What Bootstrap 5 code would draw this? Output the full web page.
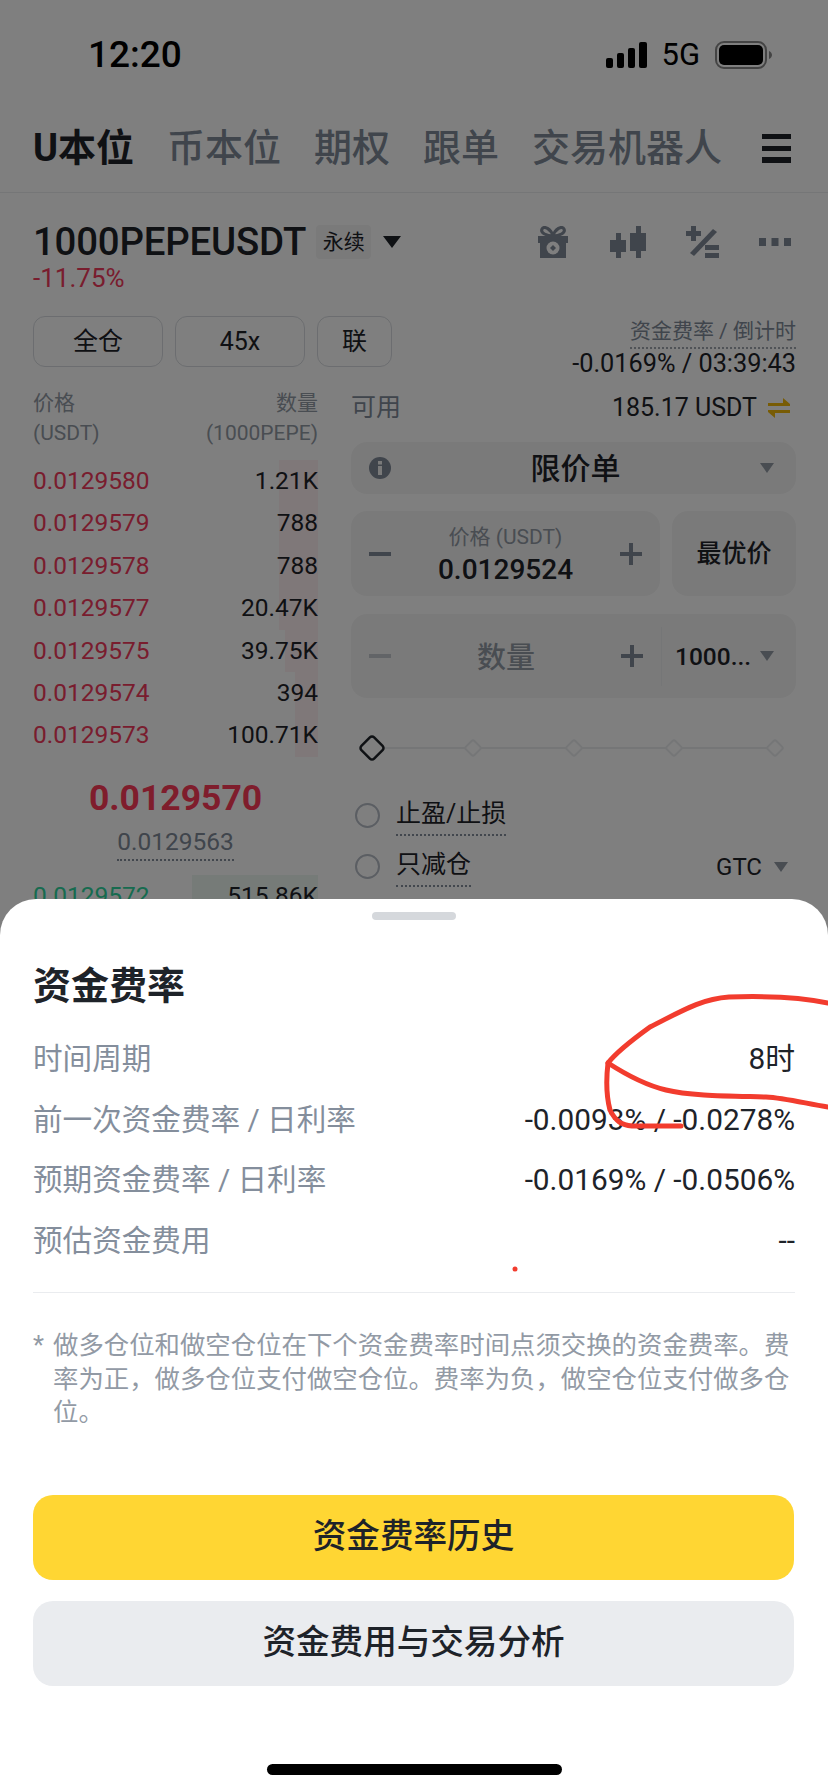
<!DOCTYPE html>
<html lang="zh-CN">
<head>
<meta charset="UTF-8">
<title>资金费率</title>
<meta name="viewport" content="width=device-width, initial-scale=1">
<link href="https://cdn.jsdelivr.net/npm/bootstrap@5.3.0/dist/css/bootstrap.min.css" rel="stylesheet">
<style>
html, body { margin: 0; background: #fff; }
body { font-family: Roboto, "Noto Sans CJK SC", sans-serif; color: #1e2329; }
.app { width: 828px; height: 1792px; position: relative; overflow: hidden; background: #fff; }
.status-bar { height: 100px; padding: 40px 56px 0 88px; }
.clock { font-size: 37px; font-weight: 500; line-height: 30px; color: #000; }
.net { font-size: 31px; line-height: 30px; color: #000; margin: 0 15px 0 14px; }
.tabs-bar { height: 93px; padding: 4px 37px 0 33px; border-bottom: 1px solid #eaecef; gap: 33px; }
.tab-item { font-size: 38px; line-height: 48px; font-weight: 500; color: #808a98; white-space: nowrap; }
.tab-item.on { color: #1e2329; font-weight: 700; }
.burger { margin-left: auto; width: 29px; height: 29px; border-top: 5px solid #1e2329; border-bottom: 6px solid #1e2329; position: relative; flex: none; }
.burger::after { content: ""; position: absolute; left: 0; right: 0; top: 7px; height: 5px; background: #1e2329; }
.sym-row { padding: 24px 37px 0 33px; height: 73px; }
.sym { font-size: 38.4px; line-height: 44px; font-weight: 500; letter-spacing: -.2px; }
.perp { width: 55px; height: 34px; margin-left: 10px; background: #f5f5f5; border-radius: 4px; font-size: 21px; line-height: 34px; text-align: center; color: #1e2329; }
.tools { margin-left: auto; gap: 40px; }
.gift-ic { margin-right: 2px; }
.chg { padding-left: 33px; font-size: 26px; line-height: 24px; height: 26px; color: #f23a5c; }
.main-cols { padding: 0 32px 0 33px; gap: 33px; }
.left-col { width: 285px; flex: none; }
.right-col { flex: 1 1 auto; min-width: 0; }
.mode-row { width: 360px; margin-top: 24px; gap: 12px; }
.mode-btn { height: 51px; border: 1px solid #d8dbe0; border-radius: 12px; font-size: 25px; line-height: 49px; text-align: center; color: #1e2329; }
.w130 { width: 130px; }
.w75 { width: 75px; }
.rate-box { height: 75px; margin-left: auto; padding-top: 26px; text-align: right; white-space: nowrap; }
.rate-lbl { display: inline-block; font-size: 21px; line-height: 27px; color: #808a98; border-bottom: 2px dotted #a0a6ae; padding-bottom: 2px; }
.rate-val { font-size: 25.3px; line-height: 30px; }
.book-head { font-size: 21px; line-height: 30px; color: #929aa5; margin-top: 21px; height: 62px; }
.book-list { margin-top: 10px; }
.book-row { height: 42.4px; font-size: 24.5px; line-height: 42px; position: relative; }
.book-row > span { position: relative; }
.depth { position: absolute; right: 0; top: 0; bottom: 0; background: #fff0f2; }
.depth.buy { background: #ecf6f1; }
.px-sell { color: #f23a5c; }
.px-buy { color: #2ed69f; }
.mid { margin-top: 19px; text-align: center; }
.mid-px { font-size: 35.5px; line-height: 44px; font-weight: 700; color: #ff3a58; }
.mid-mark { display: inline-block; font-size: 24.5px; line-height: 30px; color: #808a98; border-bottom: 2px dotted #848e9c; padding-bottom: 2px; margin-top: 7px; }
.buy-row { margin-top: 14px; }
.avail { height: 42px; margin-top: 20px; font-size: 25px; line-height: 42px; }
.avail-lbl { font-size: 25px; color: #808a98; }
.swap-ic { margin: 0 6px 0 11px; }
.field { background: #f5f5f5; border-radius: 16px; }
.order-type { height: 52px; margin-top: 13px; padding: 0 22px 0 18px; font-size: 30px; font-weight: 500; }
.grow-c { flex: 1 1 auto; text-align: center; min-width: 0; }
.price-row { margin-top: 17px; gap: 12px; height: 85px; }
.price-box { width: 309px; padding: 0 18px; }
.price-mid { padding-top: 3px; }
.best { flex: 1 1 auto; text-align: center; font-size: 25px; font-weight: 500; line-height: 85px; }
.price-lbl { font-size: 21px; line-height: 26px; color: #929aa5; }
.price-val { font-size: 28px; line-height: 34px; font-weight: 500; margin-top: 3px; }
.qty-box { height: 84px; margin-top: 18px; padding: 0 22px 0 18px; }
.qty-lbl { font-size: 29px; color: #929aa5; line-height: 84px; font-weight: 500; padding-top: 3px; }
.unit { border-left: 1px solid #eaecef; height: 59px; padding-left: 13px; margin-left: 18px; font-size: 24.5px; line-height: 59px; font-weight: 500; width: 113px; flex: none; }
.slider-row { margin-top: 35px; height: 30px; padding: 0 11px; position: relative; }
.slider-row::before { content: ""; position: absolute; left: 21px; right: 21px; top: 14px; height: 2px; background: #eaecef; }
.thumb-big { margin: 0 -5px; position: relative; flex: none; }
.thumb-sm { position: relative; flex: none; }
.check-list { margin-top: 27px; }
.check-row { height: 51px; font-size: 25px; line-height: 36px; color: #1e2329; }
.radio-o { width: 25px; height: 25px; border: 2px solid #b7bdc6; border-radius: 50%; margin: 0 16px 0 4px; flex: none; }
.dot-u { border-bottom: 2px dotted #848e9c; padding-bottom: 2px; }
.gtc { font-size: 24px; margin-right: 12px; }
.backdrop { position: absolute; inset: 0; background: rgba(0, 0, 0, .5); }
.sheet { position: absolute; left: 0; right: 0; bottom: 0; height: 893px; background: #fff; border-radius: 36px 36px 0 0; padding: 0 33px; }
.grab { width: 84px; height: 8px; margin: 13px auto 0; border-radius: 4px; background: #d5d8dc; }
.sheet-title { font-size: 38px; line-height: 48px; font-weight: 700; margin: 42px 0 0; }
.rows-wrap { margin-top: 19px; }
.info-row { height: 60.5px; font-size: 29.6px; line-height: 60px; }
.info-lbl { color: #848e9c; }
.info-val { font-size: 29.8px; }
.sheet-rule { margin: 21px 0 0; border: 0; height: 1px; background: #eaecef; opacity: 1; }
.note { margin-top: 36px; font-size: 25.4px; line-height: 33.5px; color: #929aa5; gap: 9px; }
.note-star { width: 11px; flex: none; }
.sheet-btn { display: block; width: 761px; height: 85px; border-radius: 20px; border: 0; font-size: 33.6px; font-weight: 500; color: #1e2329; padding: 0; }
.btn-y { background: #ffd633; margin-top: 65px; }
.btn-g { background: #eaecef; margin-top: 21px; }
.btn-y:hover, .btn-y:active { background: #ffd633; }
.btn-g:hover, .btn-g:active { background: #eaecef; }
.home-bar { position: absolute; left: 267px; bottom: 17px; width: 295px; height: 11px; border-radius: 6px; background: #000; }
.scribble { position: absolute; inset: 0; pointer-events: none; }
</style>
</head>
<body>
<div class="app">
    <div class="status-bar d-flex align-items-start">
        <div class="clock">12:20</div>
        <div class="ms-auto d-flex align-items-center">
            <svg width="41" height="26" viewBox="0 0 41 26" fill="#000"><rect x="0" y="16" width="7" height="10" rx="2"/><rect x="11" y="11" width="7" height="15" rx="2"/><rect x="22" y="6" width="7" height="20" rx="2"/><rect x="33" y="0" width="8" height="26" rx="2"/></svg>
            <span class="net">5G</span>
            <svg width="57" height="28" viewBox="0 0 57 28"><rect x="1" y="1" width="50" height="26" rx="8" fill="none" stroke="#888" stroke-width="2"/><rect x="4" y="4" width="44" height="20" rx="5" fill="#000"/><path d="M54 10c2 1 3 2.500 3 4s-1 3-3 4z" fill="#888"/></svg>
        </div>
    </div>

    <div class="tabs-bar d-flex align-items-center">
        <div class="tab-item on">U本位</div>
        <div class="tab-item">币本位</div>
        <div class="tab-item">期权</div>
        <div class="tab-item">跟单</div>
        <div class="tab-item">交易机器人</div>
        <div class="burger"></div>
    </div>

    <div class="sym-row d-flex align-items-center">
        <div class="sym">1000PEPEUSDT</div>
        <div class="perp">永续</div>
        <svg class="ms-2" width="26" height="12" viewBox="0 0 26 12"><path d="M4 0h18l-9 12z" fill="#1e2329"/></svg>
        <div class="tools d-flex align-items-center">
            <svg class="gift-ic" width="30" height="32" viewBox="0 0 30 32"><path d="M15 10C13 3 6-1 4 3s5 7 11 7 13-3 11-7-9 0-11 7z" fill="none" stroke="#808a98" stroke-width="3"/><rect x="0" y="10" width="30" height="7" fill="#808a98"/><rect x="2" y="17" width="26" height="15" fill="#808a98"/><circle cx="15" cy="22" r="6.500" fill="#fff"/><path d="M15 19l3 3-3 3-3-3z" fill="#808a98"/></svg>
            <svg width="36" height="32" viewBox="0 0 36 32" fill="#808a98"><rect x="0" y="14" width="16" height="12"/><rect x="6" y="7" width="5" height="25"/><rect x="20" y="7" width="16" height="18"/><rect x="26" y="0" width="5" height="32"/></svg>
            <svg width="33" height="32" viewBox="0 0 33 32" fill="#808a98"><path d="M5 0h5v5h5v5h-5v5H5v-5H0V5h5z"/><path d="M27 3l4 3L8 30l-4-3z"/><rect x="19" y="19" width="14" height="5"/><rect x="19" y="27" width="14" height="5"/></svg>
            <svg width="32" height="8" viewBox="0 0 32 8" fill="#808a98"><rect width="7" height="8"/><rect x="12.500" width="7" height="8"/><rect x="25" width="7" height="8"/></svg>
        </div>
    </div>
    <div class="chg">-11.75%</div>

    <div class="main-cols d-flex">
        <div class="left-col">
            <div class="mode-row d-flex">
                <div class="mode-btn w130">全仓</div>
                <div class="mode-btn w130">45x</div>
                <div class="mode-btn w75">联</div>
            </div>
            <div class="book-head d-flex justify-content-between">
                <div>价格<br>(USDT)</div>
                <div class="text-end">数量<br>(1000PEPE)</div>
            </div>
            <div class="book-list">
                <div class="book-row d-flex justify-content-between"><i class="depth" style="width:39px"></i><span class="px-sell">0.0129580</span><span>1.21K</span></div>
                <div class="book-row d-flex justify-content-between"><i class="depth" style="width:39px"></i><span class="px-sell">0.0129579</span><span>788</span></div>
                <div class="book-row d-flex justify-content-between"><i class="depth" style="width:39px"></i><span class="px-sell">0.0129578</span><span>788</span></div>
                <div class="book-row d-flex justify-content-between"><i class="depth" style="width:39px"></i><span class="px-sell">0.0129577</span><span>20.47K</span></div>
                <div class="book-row d-flex justify-content-between"><i class="depth" style="width:33px"></i><span class="px-sell">0.0129575</span><span>39.75K</span></div>
                <div class="book-row d-flex justify-content-between"><i class="depth" style="width:23px"></i><span class="px-sell">0.0129574</span><span>394</span></div>
                <div class="book-row d-flex justify-content-between"><i class="depth" style="width:23px"></i><span class="px-sell">0.0129573</span><span>100.71K</span></div>
            </div>
            <div class="mid">
                <div class="mid-px">0.0129570</div>
                <div class="mid-mark">0.0129563</div>
            </div>
            <div class="book-row buy-row d-flex justify-content-between"><i class="depth buy" style="width:126px"></i><span class="px-buy">0.0129572</span><span>515.86K</span></div>
        </div>

        <div class="right-col">
            <div class="rate-box">
                <div class="rate-lbl">资金费率 / 倒计时</div>
                <div class="rate-val">-0.0169% / 03:39:43</div>
            </div>
            <div class="avail d-flex align-items-center">
                <span class="avail-lbl">可用</span>
                <span class="ms-auto">185.17 USDT</span>
                <svg class="swap-ic" width="22" height="20" viewBox="0 0 22 20" fill="#f0b90b"><path d="M0 5h15V0l7 6v2H0zM22 12v3H7v5l-7-6v-2z"/></svg>
            </div>
            <div class="field order-type d-flex align-items-center">
                <svg width="22" height="22" viewBox="0 0 22 22"><circle cx="11" cy="11" r="11" fill="#808a98"/><rect x="9" y="9" width="4" height="9" fill="#f5f5f5"/><rect x="9" y="4" width="4" height="3.500" fill="#f5f5f5"/></svg>
                <div class="grow-c">限价单</div>
                <svg width="14" height="10" viewBox="0 0 14 10"><path d="M0 0h14l-7 10z" fill="#929aa5"/></svg>
            </div>
            <div class="price-row d-flex">
                <div class="field price-box d-flex align-items-center">
                    <svg width="22" height="4" viewBox="0 0 22 4"><rect width="22" height="4" fill="#808a98"/></svg>
                    <div class="grow-c price-mid">
                        <div class="price-lbl">价格 (USDT)</div>
                        <div class="price-val">0.0129524</div>
                    </div>
                    <svg width="22" height="22" viewBox="0 0 22 22" fill="#808a98"><rect y="9" width="22" height="4"/><rect x="9" width="4" height="22"/></svg>
                </div>
                <div class="field best">最优价</div>
            </div>
            <div class="field qty-box d-flex align-items-center">
                <svg width="22" height="4" viewBox="0 0 22 4"><rect width="22" height="4" fill="#c4c8ce"/></svg>
                <div class="grow-c qty-lbl">数量</div>
                <svg width="22" height="22" viewBox="0 0 22 22" fill="#808a98"><rect y="9" width="22" height="4"/><rect x="9" width="4" height="22"/></svg>
                <div class="unit d-flex align-items-center justify-content-between">
                    <span>1000...</span>
                    <svg width="14" height="10" viewBox="0 0 14 10"><path d="M0 0h14l-7 10z" fill="#929aa5"/></svg>
                </div>
            </div>
            <div class="slider-row d-flex align-items-center justify-content-between">
                <svg class="thumb-big" width="30" height="30" viewBox="0 0 30 30"><rect x="6" y="6" width="18" height="18" rx="3" transform="rotate(45 15 15)" fill="#fff" stroke="#1e2329" stroke-width="2.500"/></svg>
                <svg class="thumb-sm" width="20" height="20" viewBox="0 0 20 20"><rect x="4" y="4" width="12" height="12" rx="2" transform="rotate(45 10 10)" fill="#fff" stroke="#eaecef" stroke-width="2"/></svg>
                <svg class="thumb-sm" width="20" height="20" viewBox="0 0 20 20"><rect x="4" y="4" width="12" height="12" rx="2" transform="rotate(45 10 10)" fill="#fff" stroke="#eaecef" stroke-width="2"/></svg>
                <svg class="thumb-sm" width="20" height="20" viewBox="0 0 20 20"><rect x="4" y="4" width="12" height="12" rx="2" transform="rotate(45 10 10)" fill="#fff" stroke="#eaecef" stroke-width="2"/></svg>
                <svg class="thumb-sm" width="20" height="20" viewBox="0 0 20 20"><rect x="4" y="4" width="12" height="12" rx="2" transform="rotate(45 10 10)" fill="#fff" stroke="#eaecef" stroke-width="2"/></svg>
            </div>
            <div class="check-list">
                <div class="check-row d-flex align-items-center">
                    <i class="radio-o"></i><span class="dot-u">止盈/止损</span>
                </div>
                <div class="check-row d-flex align-items-center">
                    <i class="radio-o"></i><span class="dot-u">只减仓</span>
                    <span class="ms-auto gtc">GTC</span>
                    <svg class="me-2" width="14" height="10" viewBox="0 0 14 10"><path d="M0 0h14l-7 10z" fill="#929aa5"/></svg>
                </div>
            </div>
        </div>
    </div>

    <div class="backdrop"></div>

    <div class="sheet">
        <div class="grab"></div>
        <h2 class="sheet-title">资金费率</h2>
        <div class="rows-wrap">
            <div class="info-row d-flex justify-content-between"><span class="info-lbl">时间周期</span><span class="info-val">8时</span></div>
            <div class="info-row d-flex justify-content-between"><span class="info-lbl">前一次资金费率 / 日利率</span><span class="info-val">-0.0093% / -0.0278%</span></div>
            <div class="info-row d-flex justify-content-between"><span class="info-lbl">预期资金费率 / 日利率</span><span class="info-val">-0.0169% / -0.0506%</span></div>
            <div class="info-row d-flex justify-content-between"><span class="info-lbl">预估资金费用</span><span class="info-val">--</span></div>
        </div>
        <hr class="sheet-rule">
        <div class="note d-flex">
            <span class="note-star">*</span>
            <span>做多仓位和做空仓位在下个资金费率时间点须交换的资金费率。费率为正，做多仓位支付做空仓位。费率为负，做空仓位支付做多仓位。</span>
        </div>
        <button class="btn sheet-btn btn-y" type="button">资金费率历史</button>
        <button class="btn sheet-btn btn-g" type="button">资金费用与交易分析</button>
    </div>
    <div class="home-bar"></div>

    <svg class="scribble" width="828" height="1792" viewBox="0 0 828 1792" fill="none" stroke="#f23c2e" stroke-width="5" stroke-linecap="round" stroke-linejoin="round">
        <path d="M828 1003C800 997 760 996 729 997C700 999 680 1012 650 1027C632 1040 615 1054 608 1063C606 1080 606 1095 610 1110C616 1122 622 1125 632 1126L681 1126"/>
        <path d="M608 1063C625 1074 645 1085 666 1090C690 1096 730 1096 766 1097C785 1098 808 1104 828 1107"/>
        <circle cx="515" cy="1269" r="2.500" fill="#f23c2e" stroke="none"/>
    </svg>
</div>
<script src="https://cdn.jsdelivr.net/npm/bootstrap@5.3.0/dist/js/bootstrap.bundle.min.js"></script>
</body>
</html>
